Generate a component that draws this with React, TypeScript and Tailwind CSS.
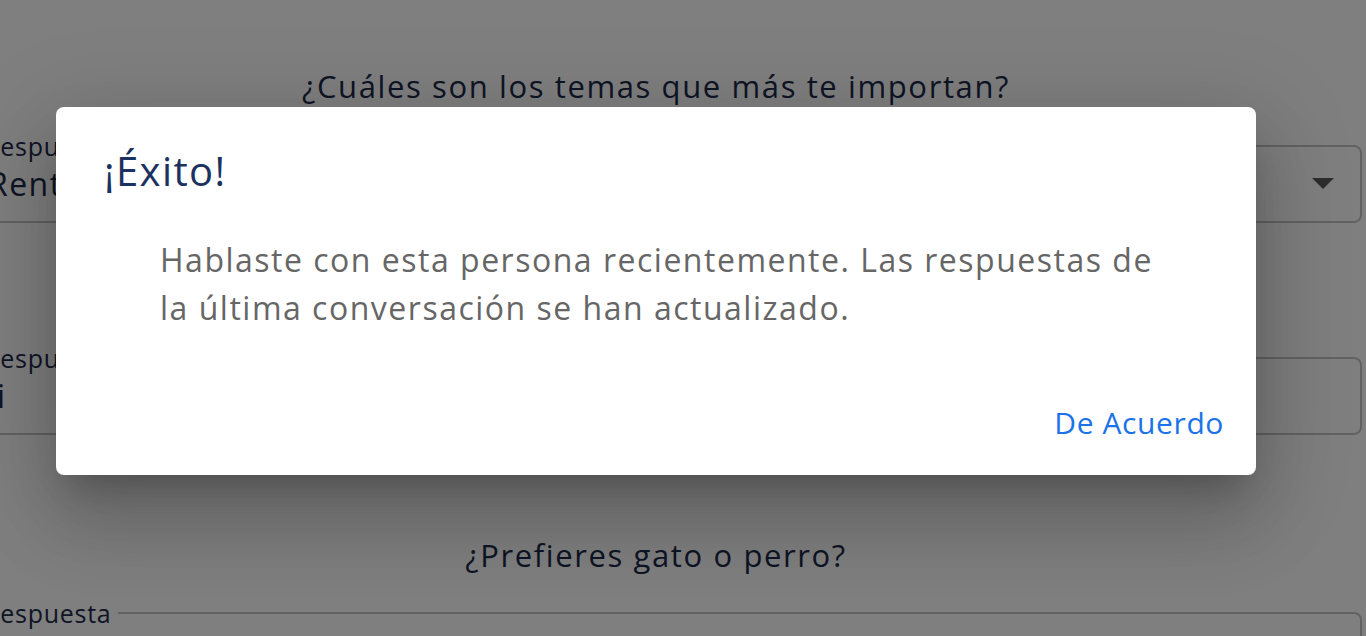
import React from "react";

const FONT = "font-['Open_Sans',_'Noto_Sans',_sans-serif]";

function Question({ text }: { text: string }) {
  return (
    <div className="w-[1312px] text-center text-[31px] leading-[40px] tracking-[0.052em] text-[#1d2b4a]">
      {text}
    </div>
  );
}

function Field({
  value,
  select,
  label = "Respuesta",
  valueClass = "",
}: {
  value?: string;
  select?: boolean;
  label?: string;
  valueClass?: string;
}) {
  return (
    <div className="relative ml-[-40px] w-[1402px] h-[78px] rounded-[8px] border-2 border-[#c4c4c4] flex items-center pl-[16px] pr-[22px]">
      <span className="absolute top-[-16px] left-[16px] bg-white pl-[6px] pr-[6px] text-[25px] leading-[30px] tracking-[0.03em] text-[#1d2b4a]">
        {label}
      </span>
      <span
        className={`flex-1 text-[32px] leading-[40px] tracking-[0.045em] text-[#1d2b4a] whitespace-nowrap ${valueClass}`}
      >
        {value}
      </span>
      {select && (
        <svg width="22" height="12" viewBox="0 0 22 12" className="mr-[4px]">
          <path d="M0 0 L22 0 L11 11 Z" fill="#5a5a5a" />
        </svg>
      )}
    </div>
  );
}

export default function App() {
  return (
    <div className={`relative w-[1366px] h-[636px] overflow-hidden bg-white ${FONT}`}>
      {/* survey page underneath */}
      <div className="flex flex-col">
        <div className="pt-[66px]">
          <Question text="¿Cuáles son los temas que más te importan?" />
        </div>
        <div className="mt-[39px]">
          <Field value="Renta básica universal" select valueClass="pl-[10px]" />
        </div>
        <div className="mt-[77px]">
          <Question text="¿Votarás este año?" />
        </div>
        <div className="mt-[17px]">
          <Field value="Si" />
        </div>
        <div className="mt-[100px]">
          <Question text="¿Prefieres gato o perro?" />
        </div>
        <div className="mt-[37px]">
          <Field />
        </div>
      </div>

      {/* backdrop + dialog */}
      <div className="absolute inset-0 bg-black/50">
        <div className="ml-[56px] mt-[107px] w-[1200px] h-[368px] rounded-[8px] bg-white flex flex-col shadow-[0_22px_30px_-14px_rgba(0,0,0,0.2),0_48px_76px_6px_rgba(0,0,0,0.14),0_18px_92px_16px_rgba(0,0,0,0.12)]">
          <h2 className="px-[48px] pt-[32px] h-[96px] text-[40px] leading-[64px] font-medium tracking-[0.035em] text-[#1b3160]">
            ¡Éxito!
          </h2>
          <p className="mt-[33px] pl-[104px] pr-[84px] text-[32px] leading-[48px] tracking-[0.047em] text-[#666666]">
            Hablaste con esta persona recientemente. Las respuestas de la última
            conversación se han actualizado.
          </p>
          <div className="mt-auto flex justify-end p-[16px]">
            <button className="h-[73px] px-[16px] text-[30px] font-medium tracking-[0.02em] text-[#1a73e8] rounded-[8px]">
              De Acuerdo
            </button>
          </div>
        </div>
      </div>
    </div>
  );
}
